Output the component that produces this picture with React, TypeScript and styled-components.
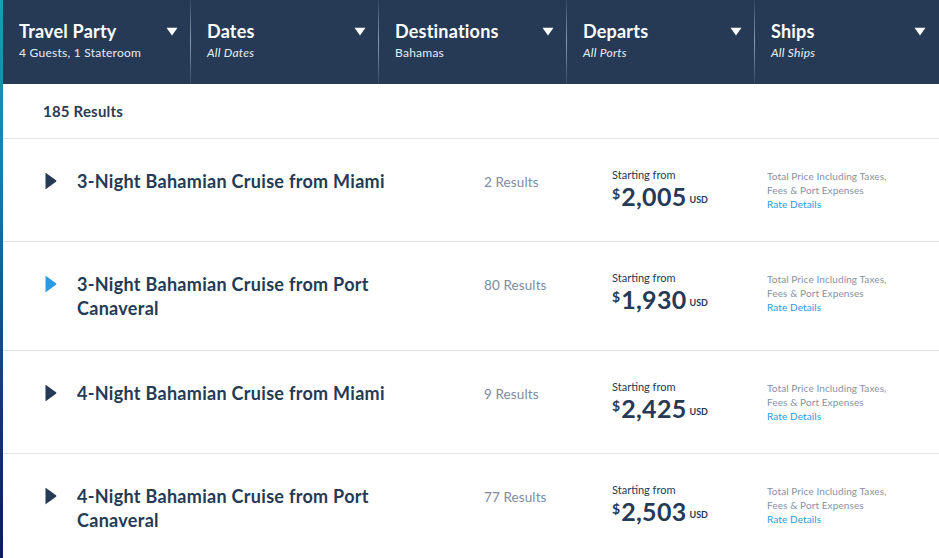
import styled, { createGlobalStyle } from "styled-components";

const GlobalStyle = createGlobalStyle`
  html, body {
    margin: 0;
    padding: 0;
    background: #ffffff;
    font-family: Lato, "Noto Sans", sans-serif;
    -webkit-font-smoothing: antialiased;
  }
  * { box-sizing: border-box; }
`;

const filters = [
  { label: "Travel Party", value: "4 Guests, 1 Stateroom", italic: false },
  { label: "Dates", value: "All Dates", italic: true },
  { label: "Destinations", value: "Bahamas", italic: false },
  { label: "Departs", value: "All Ports", italic: true },
  { label: "Ships", value: "All Ships", italic: true },
];

const cruises = [
  { title: "3-Night Bahamian Cruise from Miami", count: 2, price: "2,005", active: false },
  { title: "3-Night Bahamian Cruise from Port Canaveral", count: 80, price: "1,930", active: true },
  { title: "4-Night Bahamian Cruise from Miami", count: 9, price: "2,425", active: false },
  { title: "4-Night Bahamian Cruise from Port Canaveral", count: 77, price: "2,503", active: false },
];

const Page = styled.div`
  display: flex;
  width: 939px;
  height: 558px;
  overflow: hidden;
`;

const SideStrip = styled.div`
  width: 3px;
  flex-shrink: 0;
  background: linear-gradient(180deg, #1b9db3 0%, #1a7fa8 30%, #12356f 75%, #0d1c5c 100%);
`;

const Main = styled.div`
  flex: 1;
  display: flex;
  flex-direction: column;
  & > * { flex-shrink: 0; }
`;

const FilterBar = styled.div`
  display: grid;
  grid-template-columns: 188px 188px 188px 188px 1fr;
  height: 84px;
  background: #263a56;
`;

const Filter = styled.div<{ $divider: boolean }>`
  position: relative;
  padding: 20px 13px 0 16px;
  color: #ffffff;
  &::after {
    content: "";
    display: ${(p) => (p.$divider ? "block" : "none")};
    position: absolute;
    right: 0;
    top: 0;
    bottom: 0;
    width: 1px;
    background: linear-gradient(180deg, rgba(140,160,190,0.15) 0%, rgba(170,190,215,0.75) 50%, rgba(140,160,190,0.15) 100%);
  }
`;

const FilterHead = styled.div`
  display: flex;
  align-items: center;
  justify-content: space-between;
  height: 22px;
`;

const FilterLabel = styled.span`
  font-size: 18px;
  font-weight: 700;
  letter-spacing: 0.2px;
`;

const Caret = styled.svg`
  width: 12px;
  height: 9px;
  fill: #ffffff;
`;

const FilterValue = styled.div<{ $italic: boolean }>`
  margin-top: 3px;
  font-size: 12px;
  letter-spacing: 0.25px;
  font-style: ${(p) => (p.$italic ? "italic" : "normal")};
  color: #e8edf3;
`;

const Summary = styled.div`
  height: 55px;
  display: flex;
  align-items: center;
  padding-left: 40px;
  padding-bottom: 1px;
  font-size: 15px;
  font-weight: 700;
  letter-spacing: 0.2px;
  color: #2a3b54;
  border-bottom: 1px solid #e1e3e6;
`;

const Row = styled.div`
  display: grid;
  grid-template-columns: 33px 407px 128px 155px 1fr;
  align-items: start;
  padding: 30px 0 30px 41px;
  border-bottom: 1px solid #e1e3e6;
`;

const Arrow = styled.svg<{ $active: boolean }>`
  width: 13px;
  height: 18px;
  margin-top: 3px;
  fill: ${(p) => (p.$active ? "#2a9be0" : "#253a56")};
`;

const Title = styled.div`
  max-width: 330px;
  font-size: 18px;
  line-height: 24px;
  font-weight: 700;
  color: #253a56;
  letter-spacing: 0.3px;
`;

const Count = styled.div`
  padding-top: 5px;
  font-size: 13.5px;
  letter-spacing: 0.1px;
  color: #7d8ba0;
`;

const PriceBlock = styled.div`
  color: #253a56;
`;

const PriceLabel = styled.div`
  font-size: 11px;
  line-height: 12px;
`;

const PriceLine = styled.div`
  display: flex;
  align-items: flex-end;
  height: 30px;
`;

const Dollar = styled.span`
  font-size: 14px;
  font-weight: 700;
  align-self: flex-start;
  margin-top: 4px;
  margin-right: 1px;
`;

const Amount = styled.span`
  font-size: 25px;
  font-weight: 700;
  line-height: 30px;
  letter-spacing: 0.3px;
`;

const Currency = styled.span`
  font-size: 9px;
  font-weight: 700;
  margin: 0 0 6px 3px;
`;

const Disclaimer = styled.div`
  font-size: 10px;
  line-height: 14px;
  letter-spacing: 0.1px;
  color: #8593a6;
`;

const RateLink = styled.a`
  color: #2a9be0;
  text-decoration: none;
`;

export default function App() {
  return (
    <Page>
      <GlobalStyle />
      <SideStrip />
      <Main>
        <FilterBar>
          {filters.map((f, i) => (
            <Filter key={f.label} $divider={i < filters.length - 1}>
              <FilterHead>
                <FilterLabel>{f.label}</FilterLabel>
                <Caret viewBox="0 0 12 9">
                  <path d="M0.5 0.8 L11.5 0.8 L6 8.5 Z" strokeLinejoin="round" />
                </Caret>
              </FilterHead>
              <FilterValue $italic={f.italic}>{f.value}</FilterValue>
            </Filter>
          ))}
        </FilterBar>

        <Summary>185 Results</Summary>

        {cruises.map((c) => (
          <Row key={c.title}>
            <Arrow $active={c.active} viewBox="0 0 13 18">
              <path d="M1.5 1.2 Q1 0.4 2 1 L12 8.2 Q13 9 12 9.8 L2 17 Q1 17.6 1.5 16.8 Z" />
            </Arrow>
            <Title>{c.title}</Title>
            <Count>{c.count} Results</Count>
            <PriceBlock>
              <PriceLabel>Starting from</PriceLabel>
              <PriceLine>
                <Dollar>$</Dollar>
                <Amount>{c.price}</Amount>
                <Currency>USD</Currency>
              </PriceLine>
            </PriceBlock>
            <Disclaimer>
              Total Price Including Taxes,
              <br />
              Fees &amp; Port Expenses
              <br />
              <RateLink href="#">Rate Details</RateLink>
            </Disclaimer>
          </Row>
        ))}
      </Main>
    </Page>
  );
}
